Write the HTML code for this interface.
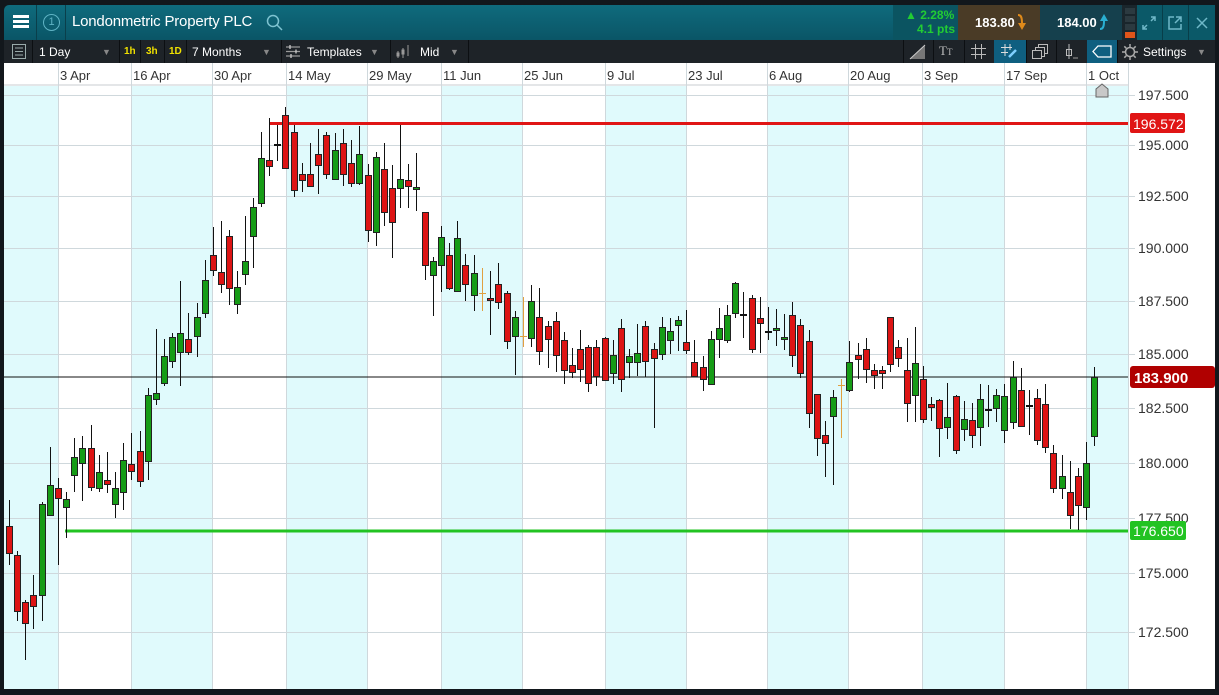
<!DOCTYPE html>
<html><head><meta charset="utf-8"><style>
*{margin:0;padding:0;box-sizing:border-box}
body{width:1219px;height:695px;background:#12171c;overflow:hidden;position:relative;font-family:"Liberation Sans",Arial,sans-serif}
.top{position:absolute;left:4px;top:5px;width:1211px;height:35px;background:linear-gradient(#0f6b7d,#0a5566);border-radius:5px 5px 0 0}
.abs{position:absolute}
.tb{position:absolute;left:4px;top:40px;width:1211px;height:23px;background:#1e2328;color:#fff;font-size:12px}
.tb span{position:absolute;top:5px}
.sep{position:absolute;top:0;width:1px;height:23px;background:#0c0f12}
</style></head><body>
<div class="top"></div>
<div class="abs" style="left:4px;top:5px;width:33px;height:35px;border-right:1px solid #0a3f4b"></div>
<div class="abs" style="left:13px;top:15px;width:16px;height:3px;background:#fff;box-shadow:0 5px 0 #fff,0 10px 0 #fff"></div>
<div class="abs" style="left:38px;top:5px;width:28px;height:35px;border-right:1px solid #0a3f4b"></div>
<div class="abs" style="left:43px;top:14px;width:17px;height:17px;border:1.5px solid #5fb3c4;border-radius:50%;color:#5fb3c4;font-size:11px;text-align:center;line-height:14px">1</div>
<div class="abs" style="left:72px;top:13px;color:#fff;font-size:15px;letter-spacing:-0.2px">Londonmetric Property PLC</div>
<svg class="abs" style="left:266px;top:14px" width="18" height="18"><circle cx="7" cy="7" r="5.5" fill="none" stroke="#7ec3d1" stroke-width="1.5"/><path d="M11 11l5 5" stroke="#7ec3d1" stroke-width="1.5"/></svg>
<div class="abs" style="left:893px;top:5px;width:65px;height:35px;background:#0b5461"></div>
<div class="abs" style="left:905px;top:8px;color:#22cc33;font-size:12px;font-weight:bold">▲ 2.28%</div>
<div class="abs" style="left:917px;top:22px;color:#22cc33;font-size:12px;font-weight:bold">4.1 pts</div>
<div class="abs" style="left:958px;top:5px;width:82px;height:35px;background:#4a3b26"></div>
<div class="abs" style="left:975px;top:15px;color:#fff;font-size:13px;font-weight:bold">183.80</div>
<svg class="abs" style="left:1016px;top:13px" width="12" height="18"><path d="M2 1c4 0 5 3 5 9h3l-4 7-4-7h3c0-5-1-7-3-7z" fill="#e08a1a"/></svg>
<div class="abs" style="left:1040px;top:5px;width:82px;height:35px;background:#15404d"></div>
<div class="abs" style="left:1057px;top:15px;color:#fff;font-size:13px;font-weight:bold">184.00</div>
<svg class="abs" style="left:1098px;top:13px" width="12" height="18"><path d="M2 17c4 0 5-3 5-9h3L6 1 2 8h3c0 5-1 7-3 7z" fill="#2aaed0"/></svg>
<div class="abs" style="left:1122px;top:5px;width:15px;height:35px;background:#1a262c"></div>
<div class="abs" style="left:1125px;top:8px;width:10px;height:6px;background:#2c3a40;box-shadow:0 8px 0 #2c3a40,0 16px 0 #2c3a40,0 24px 0 #e0551a"></div>
<div class="abs" style="left:1137px;top:5px;width:26px;height:35px;background:#0b5968;border-right:1px solid #083e49"></div>
<div class="abs" style="left:1163px;top:5px;width:26px;height:35px;background:#0b5968;border-right:1px solid #083e49"></div>
<div class="abs" style="left:1189px;top:5px;width:26px;height:35px;background:#0b5968"></div>
<svg class="abs" style="left:1141px;top:15px" width="16" height="16" stroke="#6fb8c8" stroke-width="1.5" fill="none"><path d="M2 14l4-4M2 10v4h4M14 2l-4 4M10 2h4v4"/></svg>
<svg class="abs" style="left:1167px;top:15px" width="16" height="16" stroke="#6fb8c8" stroke-width="1.5" fill="none"><path d="M7 2H2v12h12V9M9 2h5v5M14 2L8 8"/></svg>
<svg class="abs" style="left:1195px;top:16px" width="14" height="14" stroke="#6fb8c8" stroke-width="1.5"><path d="M2 2l10 10M12 2L2 12"/></svg>
<div class="tb">
<svg class="abs" style="left:8px;top:4px" width="14" height="15" fill="none" stroke="#9aa" stroke-width="1"><rect x="0.5" y="0.5" width="13" height="14"/><path d="M3 4h8M3 7.5h8M3 11h8"/></svg>
<div class="sep" style="left:28px"></div>
<span style="left:35px">1 Day</span><span style="left:98px;color:#888;font-size:9px;top:7px">▼</span>
<div class="sep" style="left:115px"></div>
<span style="left:120px;color:#f0e000;font-size:10px;font-weight:bold;top:6px">1h</span>
<div class="sep" style="left:136px"></div>
<span style="left:142px;color:#f0e000;font-size:10px;font-weight:bold;top:6px">3h</span>
<div class="sep" style="left:160px"></div>
<span style="left:165px;color:#f0e000;font-size:10px;font-weight:bold;top:6px">1D</span>
<div class="sep" style="left:182px"></div>
<span style="left:188px">7 Months</span><span style="left:258px;color:#888;font-size:9px;top:7px">▼</span>
<div class="sep" style="left:277px"></div>
<svg class="abs" style="left:282px;top:5px" width="14" height="13" stroke="#999" stroke-width="1.3"><path d="M0 2h14M0 6.5h14M0 11h14"/><path d="M4 0v4M10 4.5v4M5 9v4" stroke="#ccc"/></svg>
<span style="left:303px">Templates</span><span style="left:366px;color:#888;font-size:9px;top:7px">▼</span>
<div class="sep" style="left:386px"></div>
<svg class="abs" style="left:392px;top:5px" width="16" height="13" stroke="#999" fill="none"><path d="M2 6v7M7 3v10M12 0v11"/><rect x="1" y="8" width="2" height="3"/><rect x="6" y="5" width="2" height="4"/></svg>
<span style="left:416px">Mid</span><span style="left:446px;color:#888;font-size:9px;top:7px">▼</span>
<div class="sep" style="left:464px"></div>
<div class="sep" style="left:899px"></div>
<svg class="abs" style="left:905px;top:4px" width="18" height="16"><path d="M1 15L16 1v14z" fill="#777"/><path d="M1 15L16 1" stroke="#ccc"/></svg>
<div class="sep" style="left:929px"></div>
<span style="left:935px;color:#bbb;font-size:13px;top:3px;font-family:'Liberation Serif',serif">T<small style="font-size:9px">T</small></span>
<div class="sep" style="left:960px"></div>
<svg class="abs" style="left:967px;top:4px" width="15" height="15" stroke="#bbb"><path d="M4.5 0v15M10.5 0v15M0 4.5h15M0 10.5h15"/></svg>
<div class="abs" style="left:990px;top:0;width:32px;height:23px;background:#0f5f80"></div>
<svg class="abs" style="left:997px;top:4px" width="17" height="15" stroke="#ddd"><path d="M4 0v12M9 0v6M0 3.5h11M0 8.5h7"/><path d="M8 13l7-7" stroke="#7fd0ff" stroke-width="2.5"/></svg>
<div class="sep" style="left:1022px"></div>
<svg class="abs" style="left:1028px;top:4px" width="16" height="15" stroke="#bbb" fill="#1e2328"><rect x="6.5" y="0.5" width="9" height="9"/><rect x="3.5" y="3.5" width="9" height="9"/><rect x="0.5" y="6.5" width="9" height="8"/></svg>
<div class="sep" style="left:1052px"></div>
<svg class="abs" style="left:1060px;top:4px" width="16" height="16" stroke="#bbb" fill="none"><path d="M5 0v15"/><rect x="2.5" y="5.5" width="5" height="6"/><path d="M9 14h5" stroke="#999"/></svg>
<div class="abs" style="left:1083px;top:0;width:30px;height:23px;background:#0f5f80"></div>
<svg class="abs" style="left:1088px;top:5px" width="20" height="13" fill="none" stroke="#fff" stroke-width="1.3"><path d="M6 1h13v11H6L1 6.5z"/></svg>
<div class="sep" style="left:1113px"></div>
<svg class="abs" style="left:1118px;top:4px" width="16" height="16" stroke="#aaa" fill="none" stroke-width="1.5"><circle cx="8" cy="8" r="4.5"/><path d="M8 0v3M8 13v3M0 8h3M13 8h3M2.3 2.3l2 2M11.7 11.7l2 2M2.3 13.7l2-2M11.7 4.3l2-2"/></svg>
<span style="left:1139px">Settings</span><span style="left:1193px;color:#888;font-size:9px;top:7px">▼</span>
</div>
<svg class="abs" style="left:0;top:63px" width="1219" height="632" viewBox="0 63 1219 632" font-family="Liberation Sans, Arial, sans-serif">
<rect x="4" y="63" width="1211" height="626" fill="#fff"/>
<g fill="#e0fafc">
<rect x="4" y="86" width="54" height="603"/><rect x="131" y="86" width="81" height="603"/><rect x="286" y="86" width="81" height="603"/><rect x="441" y="86" width="81" height="603"/><rect x="605" y="86" width="81" height="603"/><rect x="767" y="86" width="81" height="603"/><rect x="922" y="86" width="82" height="603"/><rect x="1086" y="86" width="42" height="603"/>
</g>
<rect x="4" y="84" width="1124" height="2" fill="#e4e6e8"/>
<g stroke="#cfd8dc" stroke-width="1">
<path d="M58.5 63V689M131.5 63V689M212.5 63V689M286.5 63V689M367.5 63V689M441.5 63V689M522.5 63V689M605.5 63V689M686.5 63V689M767.5 63V689M848.5 63V689M922.5 63V689M1004.5 63V689M1086.5 63V689M1128.5 63V689"/>
<path d="M4 95.5H1135M4 145.5H1135M4 196.5H1135M4 248.5H1135M4 301.5H1135M4 354.5H1135M4 408.5H1135M4 463.5H1135M4 518.5H1135M4 573.5H1135M4 632.5H1135"/>
</g>
<g font-size="13" fill="#333">
<text x="60" y="80">3 Apr</text><text x="133" y="80">16 Apr</text><text x="214" y="80">30 Apr</text><text x="288" y="80">14 May</text><text x="369" y="80">29 May</text><text x="443" y="80">11 Jun</text><text x="524" y="80">25 Jun</text><text x="607" y="80">9 Jul</text><text x="688" y="80">23 Jul</text><text x="769" y="80">6 Aug</text><text x="850" y="80">20 Aug</text><text x="924" y="80">3 Sep</text><text x="1006" y="80">17 Sep</text><text x="1088" y="80">1 Oct</text>
</g>
<path d="M1096 97V89l6-5 6 5v8z" fill="#c8c8c8" stroke="#666"/>
<g font-size="14" fill="#333">
<text x="1138" y="100">197.500</text><text x="1138" y="150">195.000</text><text x="1138" y="201">192.500</text><text x="1138" y="253">190.000</text><text x="1138" y="306">187.500</text><text x="1138" y="359">185.000</text><text x="1138" y="413">182.500</text><text x="1138" y="468">180.000</text><text x="1138" y="523">177.500</text><text x="1138" y="578">175.000</text><text x="1138" y="637">172.500</text>
</g>
<rect x="4" y="376.5" width="1124" height="1" fill="#111"/>
<rect x="270" y="122" width="858" height="3" fill="#e01515"/>
<rect x="65" y="529.5" width="1063" height="3" fill="#22c322"/>
<path stroke="#111" stroke-width="1" fill="none" d="M9.5 500V565M17.5 551V621M25.5 600V660M33.5 575V629M42.5 502V621M50.5 447V515M58.5 478V565M66.5 492V538M74.5 438V492M82.5 436V501M91.5 425V491M99.5 455V492M107.5 452V493M115.5 472V518M123.5 443V510M131.5 433V480M140.5 431V487M148.5 388V480M156.5 329V405M164.5 339V386M172.5 333V368M180.5 281V386M188.5 313V355M197.5 303V357M205.5 260V318M213.5 227V276M221.5 221V293M229.5 230V305M237.5 271V314M245.5 216V285M253.5 198V268M261.5 132V207M269.5 118V176M277.5 125V161M285.5 107V168M294.5 125V197M302.5 163V192M310.5 143V187M318.5 129V194M326.5 132V179M335.5 133V179M343.5 129V186M351.5 140V187M359.5 126V185M368.5 164V242M376.5 152V246M384.5 143V226M392.5 165V258M400.5 125V208M408.5 164V208M416.5 153V211M425.5 212V280M433.5 257V316M441.5 226V292M449.5 243V290M457.5 221V292M465.5 254V301M474.5 255V311M490.5 271V335M498.5 263V309M507.5 291V349M515.5 311V375M531.5 285V347M539.5 288V365M548.5 321V368M556.5 312V372M564.5 332V384M572.5 348V378M580.5 330V382M588.5 345V392M596.5 340V386M605.5 337V380M613.5 340V384M621.5 319V392M629.5 349V378M637.5 324V376M645.5 321V377M654.5 343V428M662.5 317V360M670.5 318V354M678.5 316V351M686.5 310V354M694.5 340V377M703.5 356V391M711.5 331V385M719.5 308V358M727.5 305V343M735.5 282V318M743.5 292V338M752.5 295V353M760.5 297V353M768.5 307V340M776.5 309V346M784.5 314V350M792.5 302V367M800.5 319V378M809.5 330V428M817.5 394V456M825.5 421V477M833.5 390V485M849.5 341V392M858.5 343V379M866.5 338V383M874.5 364V389M882.5 366V389M890.5 317V372M898.5 340V367M907.5 338V422M915.5 327V422M923.5 366V423M931.5 397V421M939.5 399V457M947.5 383V439M956.5 395V454M964.5 401V441M972.5 403V448M980.5 384V446M988.5 385V427M996.5 389V422M1004.5 384V443M1013.5 361V429M1021.5 368V427M1029.5 390V435M1037.5 389V445M1045.5 384V453M1053.5 445V493M1062.5 455V499M1070.5 461V529M1078.5 468V530M1086.5 442V520M1094.5 367V446"/>
<path stroke="#e0a040" stroke-width="1" d="M482.5 268V311M479 293.5H486M523.5 297V347M520 336.5H527M841.5 379V438M838 385.5H845"/>
<g fill="#dd1414" stroke="#222" stroke-width="1">
<rect x="6.5" y="526.5" width="6" height="27"/><rect x="14.5" y="555.5" width="6" height="56"/><rect x="22.5" y="602.5" width="6" height="21"/><rect x="30.5" y="595.5" width="6" height="11"/><rect x="55.5" y="488.5" width="6" height="10"/><rect x="88.5" y="448.5" width="6" height="39"/><rect x="104.5" y="480.5" width="6" height="4"/><rect x="128.5" y="464.5" width="6" height="7"/><rect x="137.5" y="451.5" width="6" height="30"/><rect x="185.5" y="339.5" width="6" height="13"/><rect x="210.5" y="255.5" width="6" height="15"/><rect x="218.5" y="272.5" width="6" height="12"/><rect x="226.5" y="236.5" width="6" height="52"/><rect x="266.5" y="160.5" width="6" height="6"/><rect x="282.5" y="115.5" width="6" height="53"/><rect x="291.5" y="132.5" width="6" height="58"/><rect x="299.5" y="174.5" width="6" height="6"/><rect x="307.5" y="174.5" width="6" height="12"/><rect x="315.5" y="154.5" width="6" height="11"/><rect x="323.5" y="135.5" width="6" height="39"/><rect x="340.5" y="143.5" width="6" height="31"/><rect x="348.5" y="163.5" width="6" height="20"/><rect x="365.5" y="175.5" width="6" height="55"/><rect x="381.5" y="169.5" width="6" height="43"/><rect x="389.5" y="188.5" width="6" height="34"/><rect x="405.5" y="180.5" width="6" height="6"/><rect x="422.5" y="212.5" width="6" height="53"/><rect x="446.5" y="255.5" width="6" height="33"/><rect x="462.5" y="265.5" width="6" height="19"/><rect x="487.5" y="298.5" width="6" height="2"/><rect x="495.5" y="284.5" width="6" height="18"/><rect x="504.5" y="293.5" width="6" height="48"/>
<rect x="536.5" y="317.5" width="6" height="34"/><rect x="545.5" y="326.5" width="6" height="13"/><rect x="553.5" y="321.5" width="6" height="34"/><rect x="561.5" y="340.5" width="6" height="30"/><rect x="569.5" y="365.5" width="6" height="7"/><rect x="577.5" y="349.5" width="6" height="20"/><rect x="585.5" y="347.5" width="6" height="36"/><rect x="593.5" y="347.5" width="6" height="29"/><rect x="602.5" y="338.5" width="6" height="42"/><rect x="618.5" y="328.5" width="6" height="51"/><rect x="642.5" y="326.5" width="6" height="35"/><rect x="651.5" y="349.5" width="6" height="9"/><rect x="683.5" y="342.5" width="6" height="8"/><rect x="691.5" y="362.5" width="6" height="14"/><rect x="700.5" y="367.5" width="6" height="12"/><rect x="749.5" y="298.5" width="6" height="51"/><rect x="757.5" y="318.5" width="6" height="5"/><rect x="789.5" y="315.5" width="6" height="40"/><rect x="797.5" y="325.5" width="6" height="48"/><rect x="806.5" y="341.5" width="6" height="72"/><rect x="814.5" y="394.5" width="6" height="44"/><rect x="822.5" y="435.5" width="6" height="8"/><rect x="855.5" y="355.5" width="6" height="4"/><rect x="863.5" y="349.5" width="6" height="20"/><rect x="871.5" y="370.5" width="6" height="5"/><rect x="879.5" y="370.5" width="6" height="3"/><rect x="887.5" y="317.5" width="6" height="47"/><rect x="895.5" y="347.5" width="6" height="11"/><rect x="904.5" y="370.5" width="6" height="33"/><rect x="920.5" y="379.5" width="6" height="40"/><rect x="928.5" y="404.5" width="6" height="3"/><rect x="936.5" y="400.5" width="6" height="28"/><rect x="953.5" y="396.5" width="6" height="54"/><rect x="969.5" y="420.5" width="6" height="15"/><rect x="1018.5" y="390.5" width="6" height="36"/><rect x="1034.5" y="398.5" width="6" height="42"/><rect x="1042.5" y="404.5" width="6" height="43"/><rect x="1050.5" y="453.5" width="6" height="35"/><rect x="1067.5" y="492.5" width="6" height="23"/><rect x="1075.5" y="476.5" width="6" height="29"/>
</g>
<g fill="#169c16" stroke="#222" stroke-width="1">
<rect x="39.5" y="504.5" width="6" height="91"/><rect x="47.5" y="485.5" width="6" height="30"/><rect x="63.5" y="499.5" width="6" height="8"/><rect x="71.5" y="457.5" width="6" height="18"/><rect x="79.5" y="448.5" width="6" height="15"/><rect x="96.5" y="472.5" width="6" height="16"/><rect x="112.5" y="488.5" width="6" height="16"/><rect x="120.5" y="460.5" width="6" height="32"/><rect x="145.5" y="395.5" width="6" height="66"/><rect x="153.5" y="393.5" width="6" height="6"/><rect x="161.5" y="356.5" width="6" height="27"/><rect x="169.5" y="337.5" width="6" height="24"/><rect x="177.5" y="333.5" width="6" height="19"/><rect x="194.5" y="317.5" width="6" height="19"/><rect x="202.5" y="280.5" width="6" height="33"/><rect x="234.5" y="287.5" width="6" height="17"/><rect x="242.5" y="261.5" width="6" height="13"/><rect x="250.5" y="207.5" width="6" height="29"/><rect x="258.5" y="158.5" width="6" height="45"/><rect x="332.5" y="150.5" width="6" height="29"/><rect x="356.5" y="154.5" width="6" height="29"/><rect x="373.5" y="157.5" width="6" height="75"/><rect x="397.5" y="179.5" width="6" height="9"/><rect x="413.5" y="187.5" width="6" height="2"/><rect x="430.5" y="261.5" width="6" height="14"/><rect x="438.5" y="237.5" width="6" height="28"/><rect x="454.5" y="238.5" width="6" height="53"/><rect x="471.5" y="273.5" width="6" height="22"/><rect x="512.5" y="317.5" width="6" height="19"/><rect x="528.5" y="301.5" width="6" height="37"/>
<rect x="610.5" y="355.5" width="6" height="18"/><rect x="626.5" y="356.5" width="6" height="6"/><rect x="634.5" y="353.5" width="6" height="9"/><rect x="659.5" y="327.5" width="6" height="27"/><rect x="667.5" y="331.5" width="6" height="9"/><rect x="675.5" y="320.5" width="6" height="5"/><rect x="708.5" y="339.5" width="6" height="45"/><rect x="716.5" y="328.5" width="6" height="11"/><rect x="724.5" y="315.5" width="6" height="25"/><rect x="732.5" y="283.5" width="6" height="30"/><rect x="773.5" y="328.5" width="6" height="2"/><rect x="781.5" y="337.5" width="6" height="2"/><rect x="830.5" y="397.5" width="6" height="19"/><rect x="846.5" y="362.5" width="6" height="28"/><rect x="912.5" y="363.5" width="6" height="32"/><rect x="944.5" y="417.5" width="6" height="10"/><rect x="961.5" y="419.5" width="6" height="10"/><rect x="977.5" y="399.5" width="6" height="28"/><rect x="993.5" y="395.5" width="6" height="13"/><rect x="1001.5" y="396.5" width="6" height="34"/><rect x="1010.5" y="377.5" width="6" height="45"/><rect x="1059.5" y="476.5" width="6" height="12"/><rect x="1083.5" y="463.5" width="6" height="44"/><rect x="1091.5" y="377.5" width="6" height="59"/>
</g>
<g fill="#111"><rect x="274" y="144" width="7" height="2"/><rect x="740" y="314" width="7" height="2"/><rect x="765" y="331" width="7" height="2"/><rect x="985" y="409" width="7" height="2"/><rect x="1026" y="405" width="7" height="2"/></g>
<rect x="1130" y="113" width="55" height="20" rx="2" fill="#e01515"/>
<text x="1133" y="129" font-size="14" fill="#fff">196.572</text>
<rect x="1130" y="366" width="85" height="22" rx="3" fill="#b00000"/>
<text x="1134" y="383" font-size="15" font-weight="bold" fill="#fff">183.900</text>
<rect x="1130" y="521" width="56" height="19" rx="2" fill="#22c322"/>
<text x="1133" y="536" font-size="14" fill="#fff">176.650</text>
</svg>
</body></html>
